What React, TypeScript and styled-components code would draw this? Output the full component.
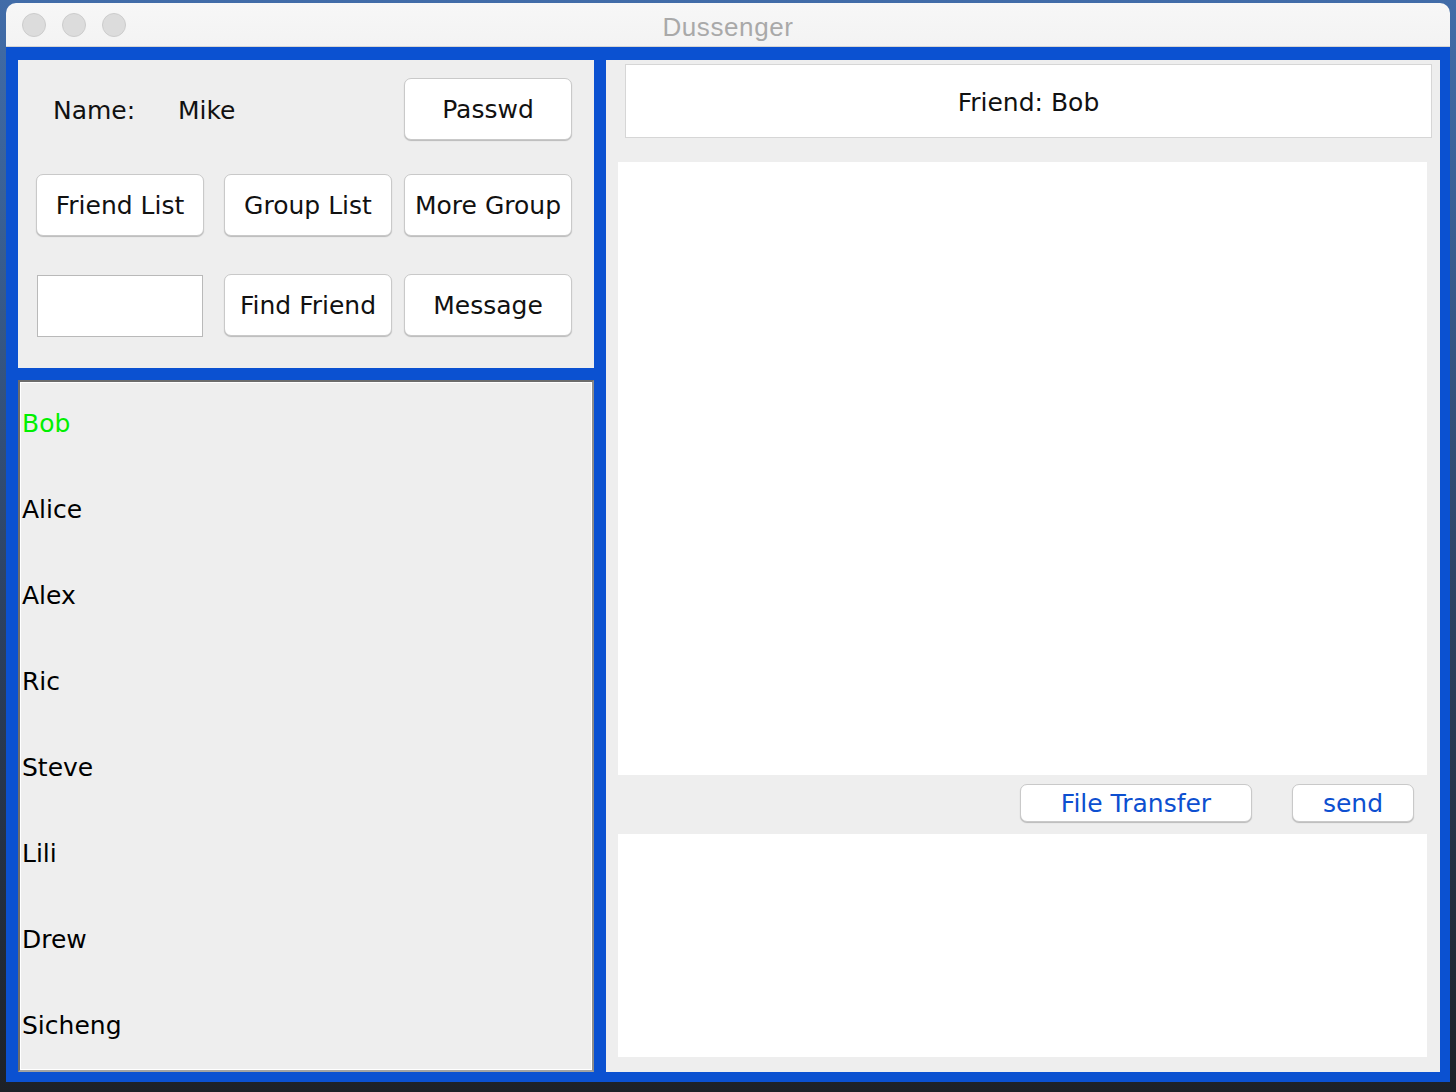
import React from "react";
import styled, { createGlobalStyle } from "styled-components";

const GlobalStyle = createGlobalStyle`
  html, body {
    margin: 0;
    padding: 0;
  }
  body {
    width: 1456px;
    height: 1092px;
    overflow: hidden;
    background: linear-gradient(180deg, #416ca8 0%, #3a6196 18%, #2d4262 55%, #1d2127 100%);
    font-family: "DejaVu Sans", "Liberation Sans", sans-serif;
  }
`;

const friends = ["Bob", "Alice", "Alex", "Ric", "Steve", "Lili", "Drew", "Sicheng"];

export default function App() {
  return (
    <>
      <GlobalStyle />
      <Desktop>
        <Window>
          <TitleBar>
            <Lights>
              <Light />
              <Light />
              <Light />
            </Lights>
            <Title>Dussenger</Title>
            <span />
          </TitleBar>
          <Content>
            <LeftColumn>
              <TopPanel>
                <NameRow>
                  <NameKey>Name:</NameKey>
                  <span>Mike</span>
                </NameRow>
                <Button $col={3}>Passwd</Button>
                <Button $col={1}>Friend List</Button>
                <Button $col={2}>Group List</Button>
                <Button $col={3}>More Group</Button>
                <SearchField />
                <Button $col={2}>Find Friend</Button>
                <Button $col={3}>Message</Button>
              </TopPanel>
              <FriendList>
                {friends.map((name, i) => (
                  <FriendItem key={name} $active={i === 0}>
                    {name}
                  </FriendItem>
                ))}
              </FriendList>
            </LeftColumn>
            <RightPanel>
              <Header>Friend: Bob</Header>
              <ChatArea />
              <ActionBar>
                <ActionButton $width={232}>File Transfer</ActionButton>
                <ActionButton $width={122}>send</ActionButton>
              </ActionBar>
              <InputArea />
            </RightPanel>
          </Content>
        </Window>
      </Desktop>
    </>
  );
}

const Desktop = styled.div`
  padding: 3px 6px 10px 6px;
`;

const Window = styled.div`
  width: 1444px;
  height: 1079px;
  display: flex;
  flex-direction: column;
  border-radius: 10px 10px 0 0;
  overflow: hidden;
`;

const TitleBar = styled.div`
  height: 43px;
  flex: none;
  display: grid;
  grid-template-columns: 1fr auto 1fr;
  align-items: center;
  background: linear-gradient(180deg, #f7f7f7 0%, #f3f3f3 100%);
  border-bottom: 1px solid #d4d4d4;
`;

const Lights = styled.div`
  display: flex;
  gap: 16px;
  padding-left: 16px;
`;

const Light = styled.div`
  width: 22px;
  height: 22px;
  border-radius: 50%;
  background: #dcdcdc;
  border: 1px solid #cccccc;
`;

const Title = styled.div`
  padding-top: 5px;
  font-family: "Liberation Sans", Arial, sans-serif;
  font-size: 26px;
  color: #a9a9a9;
  letter-spacing: 0.6px;
`;

const Content = styled.div`
  flex: 1;
  background: #0b51d1;
  padding: 13px 10px 14px 12px;
  display: grid;
  grid-template-columns: 576px 834px;
  column-gap: 12px;
`;

const LeftColumn = styled.div`
  display: flex;
  flex-direction: column;
  gap: 12px;
`;

const TopPanel = styled.div`
  height: 308px;
  box-sizing: border-box;
  background: #eeeeee;
  padding: 18px 0 0 18px;
  display: grid;
  grid-template-columns: 188px 180px 168px;
  grid-template-rows: 62px 62px 66px;
  row-gap: 34px;
  align-items: end;
`;

const NameRow = styled.div`
  grid-column: 1 / span 2;
  align-self: center;
  display: flex;
  align-items: center;
  padding: 2px 0 0 17px;
  font-size: 25px;
  color: #111;
`;

const NameKey = styled.span`
  width: 125px;
`;

const Button = styled.button<{ $col: number }>`
  grid-column: ${(p) => p.$col};
  width: 168px;
  height: 62px;
  margin: 0;
  padding: 0;
  background: #ffffff;
  border: 1px solid #c9c9c9;
  border-radius: 7px;
  box-shadow: 0 1px 1px rgba(0, 0, 0, 0.22);
  font-family: "DejaVu Sans", "Liberation Sans", sans-serif;
  font-size: 25px;
  color: #111;
`;

const SearchField = styled.div`
  grid-column: 1;
  width: 166px;
  height: 62px;
  box-sizing: border-box;
  margin: 0 0 -1px 1px;
  background: #ffffff;
  border: 1px solid #b9b9b9;
`;

const FriendList = styled.div`
  flex: 1;
  box-sizing: border-box;
  background: #eeeeee;
  border: 2px solid;
  border-color: #6c6c6c #8c8c8c #a2a2a2 #6c6c6c;
  box-shadow: inset 0 0 0 1px #ffffff;
  display: flex;
  flex-direction: column;
`;

const FriendItem = styled.div<{ $active: boolean }>`
  height: 86px;
  display: flex;
  align-items: center;
  padding: 0 0 4px 2px;
  box-sizing: border-box;
  font-size: 25px;
  color: ${(p) => (p.$active ? "#00f000" : "#000000")};
`;

const RightPanel = styled.div`
  background: #eeeeee;
  display: flex;
  flex-direction: column;
`;

const Header = styled.div`
  height: 74px;
  box-sizing: border-box;
  margin: 4px 8px 0 19px;
  background: #ffffff;
  border: 1px solid #d6d6d6;
  display: flex;
  align-items: center;
  justify-content: center;
  padding-top: 2px;
  font-size: 25px;
  color: #111;
`;

const ChatArea = styled.div`
  height: 613px;
  margin: 24px 13px 0 12px;
  background: #ffffff;
`;

const ActionBar = styled.div`
  height: 59px;
  box-sizing: border-box;
  padding: 9px 26px 0 0;
  display: flex;
  justify-content: flex-end;
  align-items: flex-start;
  gap: 40px;
`;

const ActionButton = styled.button<{ $width: number }>`
  width: ${(p) => p.$width}px;
  height: 38px;
  margin: 0;
  padding: 0;
  background: #ffffff;
  border: 1px solid #c9c9c9;
  border-radius: 7px;
  box-shadow: 0 1px 1px rgba(0, 0, 0, 0.22);
  font-family: "DejaVu Sans", "Liberation Sans", sans-serif;
  font-size: 25px;
  color: #0d4fd0;
`;

const InputArea = styled.div`
  height: 223px;
  margin: 0 13px 11px 12px;
  background: #ffffff;
`;
